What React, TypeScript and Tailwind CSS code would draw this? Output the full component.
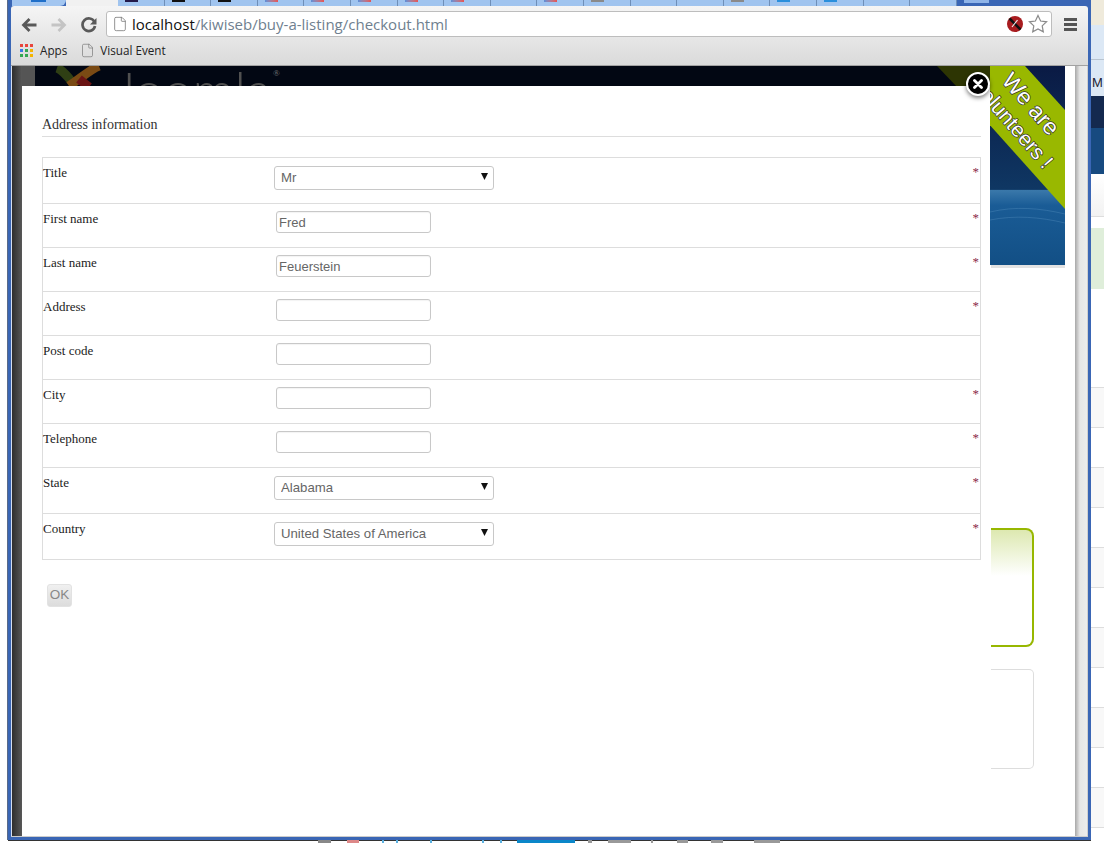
import React from "react";
import { File } from "lucide-react";

const mixed = "bg-gradient-to-r from-[#5a8fd8] to-[#e8504f]";
const marks: Record<number, string> = {
  0: "bg-[#241a4a]",
  1: "bg-[#111]",
  2: "bg-[#111]",
  3: mixed,
  4: mixed,
  5: mixed,
  6: mixed,
  7: mixed,
  9: mixed,
  10: "bg-[#8a8a8a]",
  13: "bg-[#8a8a8a]",
  14: "bg-[#2a8fdc]",
  15: "bg-[#2a8fdc]",
};

const rows = [
  { label: "Title", kind: "select", value: "Mr", required: true },
  { label: "First name", kind: "input", value: "Fred", required: true },
  { label: "Last name", kind: "input", value: "Feuerstein", required: true },
  { label: "Address", kind: "input", value: "", required: true },
  { label: "Post code", kind: "input", value: "", required: false },
  { label: "City", kind: "input", value: "", required: true },
  { label: "Telephone", kind: "input", value: "", required: true },
  { label: "State", kind: "select", value: "Alabama", required: true },
  { label: "Country", kind: "select", value: "United States of America", required: true },
];

const sideRows = Array.from({ length: 12 }, (_, i) => i);

function Tabs() {
  return (
    <div className="flex h-[6px] shrink-0 overflow-hidden bg-[#3a66b5] pl-[1px]">
      <div className="w-[54px] shrink-0 rounded-br-md bg-[#a3c6f0] pl-[19px]">
        <div className="h-[2px] w-[15px] bg-[#1f6fc9]" />
      </div>
      <div className="w-[52px] shrink-0 bg-[#f1f1f1]" />
      {Array.from({ length: 18 }, (_, i) => (
        <div
          key={i}
          className="w-[46.6px] shrink-0 border-r border-[#6f8fb8] bg-[#a0c4ef] pl-[7px]"
        >
          {marks[i] && <div className={`h-[2px] w-[13px] ${marks[i]}`} />}
        </div>
      ))}
      <div className="ml-[7px] h-[3px] w-[25px] shrink-0 bg-[#8fb4e8]" />
    </div>
  );
}

function Toolbar() {
  return (
    <div className="h-[60px] shrink-0 rounded-t-[3px] border-b border-[#a2a2a2] bg-gradient-to-b from-[#f5f5f5] to-[#dadada]">
      <div className="flex h-[31px] items-end">
        <div className="flex w-[95px] items-center gap-[14px] pb-[4px] pl-[10px]">
          <svg width="16" height="16" viewBox="0 0 16 16" fill="none" stroke="#595959" strokeWidth="2.8">
            <path d="M15.5 8H3M8.5 2L2.5 8l6 6" />
          </svg>
          <svg width="16" height="16" viewBox="0 0 16 16" fill="none" stroke="#c4c4c4" strokeWidth="2.8">
            <path d="M.5 8H13M7.500 2l6 6-6 6" />
          </svg>
          <svg width="16" height="16" viewBox="0 0 16 16" fill="none">
            <path d="M13.4 4.800A6.300 6.300 0 1 0 14 9" stroke="#595959" strokeWidth="2.700" />
            <path d="M15.500 1v6.500H9z" fill="#595959" />
          </svg>
        </div>
        <div className="flex h-[26px] w-[946px] items-center rounded-[3px] border border-[#bdbdbd] bg-white pl-[5px] pr-[3px] font-['Open_Sans',sans-serif] text-[15px]">
          <File size={16} strokeWidth={1.2} color="#777" />
          <span className="ml-[4px] text-[#111]">localhost</span>
          <span className="text-[#6f7f8f]">/kiwiseb/buy-a-listing/checkout.html</span>
          <svg className="ml-auto" width="18" height="18" viewBox="0 0 18 18">
            <circle cx="9" cy="9" r="8" fill="#a81c1f" />
            <path d="M3.500 3.500l11 11" stroke="#111" strokeWidth="2.500" />
            <path d="M11.500 5L6 12" stroke="#eee" strokeWidth="1.200" />
          </svg>
          <svg className="ml-[4px]" width="20" height="20" viewBox="0 0 20 20" fill="#fff" stroke="#8a8a8a" strokeWidth="1.200">
            <path d="M10 1.500l2.600 5.500 6 .8-4.400 4.100 1.100 6L10 15l-5.300 2.900 1.100-6L1.400 7.800l6-.8z" />
          </svg>
        </div>
        <div className="ml-[12px] flex w-[13px] flex-col gap-[2px] pb-[6px]">
          <div className="h-[3px] bg-[#555]" />
          <div className="h-[3px] bg-[#555]" />
          <div className="h-[3px] bg-[#555]" />
        </div>
      </div>
      <div className="flex items-center pl-[9px] pt-[5px] font-['Open_Sans',sans-serif] text-[11.7px] text-[#222]">
        <div className="grid w-[13px] grid-cols-3 gap-[2px]">
          {["bg-[#e8453c]", "bg-[#e8453c]", "bg-[#e8453c]", "bg-[#3b78e7]", "bg-[#34a853]", "bg-[#f4b400]", "bg-[#34a853]", "bg-[#34a853]", "bg-[#f4b400]"].map((c, i) => (
            <div key={i} className={`h-[3px] ${c}`} />
          ))}
        </div>
        <span className="ml-[7px]">Apps</span>
        <File className="ml-[13px]" size={15} strokeWidth={1.1} color="#777" />
        <span className="ml-[5px]">Visual Event</span>
      </div>
    </div>
  );
}

function Banner() {
  return (
    <svg width="75" height="199" viewBox="990 66 75 199" className="block">
      <defs>
        <linearGradient id="sky" x1="0" y1="0" x2="0" y2="1">
          <stop offset="0" stopColor="#0a1a44" />
          <stop offset="0.62" stopColor="#0f3763" />
          <stop offset="0.625" stopColor="#3a78aa" />
          <stop offset="0.7" stopColor="#1a5c96" />
          <stop offset="1" stopColor="#124f85" />
        </linearGradient>
      </defs>
      <rect x="990" y="66" width="75" height="199" fill="url(#sky)" />
      <path d="M990 212c25-6 50-4 75 2M990 220c25-5 50-3 75 3" fill="none" stroke="#5b94c2" strokeOpacity="0.35" />
      <path d="M1025 66L1065 110V209L937 66Z" fill="#99b800" />
      <g
        fontFamily="'Liberation Sans', sans-serif"
        fill="#fff"
        stroke="#333"
        strokeWidth="1.4"
        paintOrder="stroke"
        textAnchor="middle"
      >
        <text fontSize="23" transform="translate(1025 109) rotate(49)">We are</text>
        <text fontSize="21" transform="translate(1008 129) rotate(49)">volunteers !</text>
      </g>
    </svg>
  );
}

export default function App() {
  return (
    <div className="flex h-[843px] w-[1104px] flex-col overflow-hidden bg-white font-['Liberation_Serif',serif]">
      <div className="flex h-[840px] shrink-0">
        <div className="w-[8px] shrink-0" />
        <div className="flex w-[1083px] shrink-0 flex-col bg-[#3a66b5] px-[3px] pb-[3px] shadow-[0_1px_0_#333,-1px_0_0_#5a6a88]">
          <Tabs />
          <Toolbar />
          <div className="relative flex min-h-0 flex-1 border-b border-[#cccccc] bg-white">
            <div className="w-[11px] shrink-0 border-l border-[#d5deee] bg-gradient-to-r from-[#2e2e2e] to-[#585858]" />
            <div className="flex w-[968px] shrink-0 flex-col">
              <div className="relative flex h-[20px] shrink-0 overflow-hidden bg-[#020713]">
                <div className="w-[13px] shrink-0 bg-[#555]" />
                <svg className="ml-[20px] shrink-0" width="46" height="20" viewBox="0 0 46 20" fill="none" strokeWidth="9">
                  <path d="M2 2c6 2 12 10 18 18" stroke="#2f3f14" />
                  <path d="M44 0C36 3 26 12 14 20" stroke="#7a4a14" />
                  <path d="M24 13l10 8" stroke="#6b1414" />
                </svg>
                <span className="ml-[13px] -mt-[3px] font-['Lato',sans-serif] text-[52px] leading-[52px] font-light text-[#505050]">
                  Joomla
                </span>
                <span className="ml-[2px] mt-[3px] text-[9px] leading-[9px] text-[#777]">®</span>
                <div className="absolute left-[915px] top-0 h-[20px] w-[53px] bg-[#2d3503] [clip-path:polygon(0_0,100%_0,100%_100%,36%_100%)]" />
              </div>
              <div className="min-h-0 flex-1 rounded-tl-[3px] bg-white pl-[20px] pr-[9px] pt-[30px]">
                <h2 className="border-b border-[#dddddd] pb-[3px] text-[14px] leading-[17px] font-normal text-[#333]">
                  Address information
                </h2>
                <div className="mt-[20px] w-[939px] border border-[#dddddd] border-t-0">
                  {rows.map((r) => (
                    <div
                      key={r.label}
                      className={`flex border-t border-[#dddddd] pt-[7px] ${r.kind === "select" ? "h-[46px]" : "h-[44px]"}`}
                    >
                      <div className="w-[231px] shrink-0 text-[13px] leading-[16px] text-[#222]">{r.label}</div>
                      {r.kind === "select" ? (
                        <div className="relative h-[24px] w-[220px] shrink-0">
                          <select
                            defaultValue={r.value}
                            className="h-full w-full appearance-none rounded-[3px] border border-[#c8c8c8] bg-white pl-[6px] font-['Liberation_Sans',sans-serif] text-[13.2px] text-[#666]"
                          >
                            <option>{r.value}</option>
                          </select>
                          <svg className="absolute right-[6px] top-[8px]" width="7" height="7" viewBox="0 0 7 7">
                            <path d="M0 0h7L3.500 7z" fill="#111" />
                          </svg>
                        </div>
                      ) : (
                        <input
                          defaultValue={r.value}
                          className="ml-[2px] h-[22px] w-[155px] shrink-0 rounded-[3px] border border-[#c8c8c8] bg-white pl-[2px] font-['Liberation_Sans',sans-serif] text-[13px] text-[#666] shadow-[inset_0_1px_1px_rgba(0,0,0,0.05)]"
                        />
                      )}
                      {r.required && (
                        <span className="ml-auto -mt-px pr-px text-[13px] leading-[16px] text-[#8a2a4a]">*</span>
                      )}
                    </div>
                  ))}
                </div>
                <button className="ml-[5px] mt-[24px] h-[23px] w-[25px] rounded-[3px] border border-[#e2e2e2] bg-gradient-to-b from-[#f0f0f0] to-[#dcdcdc] font-['Liberation_Sans',sans-serif] text-[13.5px] text-[#888]">
                  OK
                </button>
              </div>
            </div>
            <div className="flex w-[85px] shrink-0 flex-col">
              <Banner />
              <div className="ml-px mr-[10px] h-[3px] bg-[#e2e2e2]" />
              <div className="ml-px mt-[260px] h-[119px] w-[43px] rounded-r-lg border-2 border-l-0 border-[#97b700] bg-gradient-to-b from-[#dde8b0] via-white via-40% to-white" />
              <div className="ml-px mt-[22px] h-[100px] w-[43px] rounded-r-[5px] border border-l-0 border-[#dddddd]" />
            </div>
            <div className="w-[13px] shrink-0 border-r border-[#cfcfcf] bg-gradient-to-r from-[#a8a8a8] via-[#e6e6e6] via-40% to-[#ececec]" />
            <div className="absolute left-[955px] top-[6px] flex h-[24px] w-[24px] items-center justify-center rounded-full border-2 border-white bg-black shadow-[0_2px_4px_rgba(0,0,0,0.5)]">
              <svg width="10" height="10" viewBox="0 0 10 10" stroke="#fff" strokeWidth="2.800" strokeLinecap="round">
                <path d="M1.500 1.500l7 7M8.500 1.500l-7 7" />
              </svg>
            </div>
          </div>
        </div>
        <div className="flex min-w-0 flex-1 flex-col overflow-hidden">
          <div className="h-[25px] shrink-0 bg-[#efeadb]" />
          <div className="h-[35px] shrink-0 border-b border-[#b8c4d0] bg-[#dce8f5]" />
          <div className="h-[36px] shrink-0 bg-[#dce8f5] pl-px font-['Liberation_Sans',sans-serif] text-[13px] leading-[46px] text-[#223]">
            M
          </div>
          <div className="h-[32px] shrink-0 bg-[#14294f]" />
          <div className="h-[46px] shrink-0 bg-[#174a80]" />
          <div className="h-[43px] shrink-0 border-b border-[#dddddd] bg-gradient-to-b from-white to-[#f2f2f2]" />
          <div className="mt-[11px] h-[61px] shrink-0 bg-[#dfeeda]" />
          <div className="h-[98px] shrink-0" />
          {sideRows.map((i) => (
            <div
              key={i}
              className={`h-[40px] shrink-0 border-t border-[#dddddd] ${i % 2 === 0 ? "bg-[#f8f8f8]" : "bg-white"}`}
            />
          ))}
        </div>
      </div>
      <div className="flex h-[3px] shrink-0 pl-[318px]">
        <div className="w-[13px] bg-[#888]" />
        <div className="ml-[16px] w-[12px] bg-[#d88]" />
        <div className="ml-[23px] w-[2px] bg-[#5ab0e0]" />
        <div className="ml-[12px] w-[2px] bg-[#5ab0e0]" />
        <div className="ml-[32px] w-[2px] bg-[#5ab0e0]" />
        <div className="ml-[50px] w-[2px] bg-[#5ab0e0]" />
        <div className="ml-[16px] w-[2px] bg-[#5ab0e0]" />
        <div className="ml-[15px] w-[58px] bg-[#0b87c9]" />
        <div className="ml-[13px] w-[4px] bg-[#999]" />
        <div className="ml-[16px] w-[23px] bg-[#999]" />
        <div className="ml-[20px] w-[2px] bg-[#999]" />
        <div className="ml-[24px] w-[11px] bg-[#999]" />
        <div className="ml-[23px] w-[12px] bg-[#999]" />
        <div className="ml-[31px] w-[26px] bg-[#999]" />
      </div>
    </div>
  );
}
